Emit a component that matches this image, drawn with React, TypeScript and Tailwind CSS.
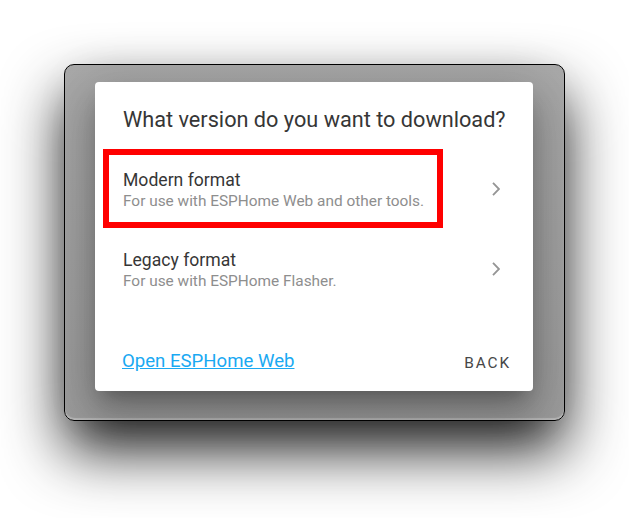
const Chevron = () => (
  <svg width="8" height="14" viewBox="0 0 8 14" fill="none">
    <path d="M1 0.8l6 6.2-6 6.2" stroke="#959595" strokeWidth="1.8" />
  </svg>
);

const options = [
  { title: "Modern format", desc: "For use with ESPHome Web and other tools." },
  { title: "Legacy format", desc: "For use with ESPHome Flasher." },
];

export default function App() {
  return (
    <div className="w-[629px] h-[518px] overflow-hidden bg-white pt-[64px] pl-[64px] font-['Roboto',sans-serif]">
      <div className="w-[501px] h-[357px] rounded-[10px] border border-black bg-gradient-to-b from-[#a9a9a9] to-[#9c9c9c] pt-[17px] pl-[30px] shadow-[0_30px_60px_rgba(0,0,0,0.85),inset_0_-2px_1px_rgba(255,255,255,0.3)]">
        <div className="relative flex h-[309px] w-[438px] flex-col rounded-[4px] bg-white shadow-[0_12px_17px_-8px_rgba(0,0,0,0.25),0_26px_42px_3px_rgba(0,0,0,0.18),0_10px_50px_9px_rgba(0,0,0,0.15)]">
          <h2 className="pl-[28px] pt-[24px] text-[21.7px] leading-[28px] text-[#363636]">
            What version do you want to download?
          </h2>

          <div className="mt-[15px]">
            {options.map((opt) => (
              <div key={opt.title} className="flex h-[80px] justify-between pl-[28px] pr-[33px]">
                <div className="pt-[21px]">
                  <div className="text-[17.6px] leading-[20px] text-[#363636]">{opt.title}</div>
                  <div className="text-[15.4px] leading-[23px] text-[#8e8e8e]">{opt.desc}</div>
                </div>
                <div className="self-center">
                  <Chevron />
                </div>
              </div>
            ))}
          </div>

          <div className="mt-auto flex items-end justify-between pl-[27px] pr-[22px] pb-[18px]">
            <a href="#" className="mb-[2px] text-[18.6px] leading-[20px] text-[#1aa9f2] underline">
              Open ESPHome Web
            </a>
            <button className="text-[15.4px] leading-[20px] tracking-[1.9px] text-[#474747]">
              BACK
            </button>
          </div>

          <div className="absolute left-[8px] top-[67px] h-[79px] w-[340px] border-[6px] border-[#ff0000]" />
        </div>
      </div>
    </div>
  );
}
